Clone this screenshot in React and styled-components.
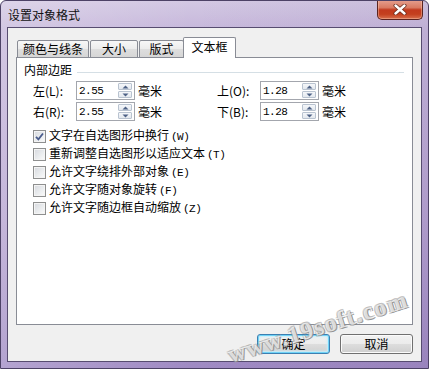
import React from 'react';
import styled, { createGlobalStyle } from 'styled-components';

const Global = createGlobalStyle`
  html, body { margin: 0; padding: 0; background: #ffffff; }
  body {
    font-family: "Noto Sans CJK SC", "Noto Sans", sans-serif;
    font-size: 12px;
    color: #000;
  }
  * { box-sizing: border-box; }
`;

const Window = styled.div`
  position: relative;
  width: 429px;
  height: 369px;
  display: flex;
  flex-direction: column;
  border: 1px solid #4d4266;
  border-radius: 6px 6px 0 0;
  background:
    linear-gradient(90deg, rgba(255,255,255,0.22) 0%, rgba(255,255,255,0) 45%, rgba(60,30,100,0.06) 100%),
    linear-gradient(180deg, #d3c8e3 0%, #c6b7db 8%, #b5a2d0 60%, #9f8ac3 100%);
  overflow: hidden;
`;

const TitleBar = styled.div`
  height: 26px;
  flex-shrink: 0;
  display: flex;
  align-items: flex-start;
  padding: 0 5px 0 7px;
`;

const Title = styled.div`
  margin-top: 6px;
  font-size: 12px;
  line-height: 16px;
  color: #111;
`;

const CloseButton = styled.div`
  margin-left: auto;
  margin-top: -1px;
  width: 46px;
  height: 20px;
  border: 1px solid #5b2420;
  border-top: none;
  border-radius: 0 0 5px 5px;
  background: linear-gradient(180deg, #e6a090 0%, #d97a62 40%, #c23a1e 52%, #c4401f 75%, #d8704e 100%);
  box-shadow: inset 0 0 0 1px rgba(255, 210, 190, 0.4);
  display: flex;
  align-items: center;
  justify-content: center;
`;

const Client = styled.div`
  flex: 1;
  margin: 0 6px 6px;
  border: 1px solid #574c70;
  background: #f0f0f0;
  padding: 9px 8px 7px 8px;
  display: flex;
  flex-direction: column;
`;

const TabRow = styled.div`
  height: 21px;
  margin-bottom: -1px;
  display: flex;
  align-items: flex-end;
  position: relative;
  z-index: 1;
`;

const Tab = styled.div`
  width: ${p => p.$w}px;
  margin-left: ${p => p.$ml}px;
  height: ${p => (p.$active ? 21 : 18)}px;
  border: 1px solid #898c95;
  border-bottom: ${p => (p.$active ? 'none' : '1px solid #898c95')};
  border-radius: 2px 2px 0 0;
  background: ${p =>
    p.$active
      ? '#ffffff'
      : 'linear-gradient(180deg, #f7f7f7 0%, #ececec 50%, #dedede 51%, #d6d6d6 100%)'};
  display: flex;
  align-items: center;
  justify-content: center;
  padding-bottom: ${p => (p.$active ? 2 : 0)}px;
  font-size: 12px;
  line-height: 14px;
  position: relative;
  z-index: ${p => (p.$active ? 2 : 1)};
`;

const Panel = styled.div`
  flex: 1;
  border: 1px solid #898c95;
  background: #ffffff;
  padding: 4px 8px 0 7px;
  display: flex;
  flex-direction: column;
`;

const GroupHeader = styled.div`
  height: 16px;
  display: flex;
  align-items: center;
  gap: 5px;
`;

const GroupTitle = styled.span`
  font-size: 12px;
  line-height: 16px;
`;

const GroupLine = styled.div`
  flex: 1;
  height: 1px;
  margin-top: 4px;
  background: #d5dfe5;
`;

const SpinGrid = styled.div`
  margin-top: 3px;
  padding-left: 9px;
  display: flex;
  flex-direction: column;
  gap: 2px;
`;

const SpinRow = styled.div`
  display: flex;
  height: 19px;
`;

const Field = styled.div`
  width: 184px;
  display: flex;
  align-items: center;
`;

const FieldLabel = styled.span`
  width: 43px;
  font-size: 12px;
  line-height: 14px;
  white-space: nowrap;
`;

const InputBox = styled.div`
  width: 59px;
  height: 19px;
  border: 1px solid #a3a6ad;
  background: #fff;
  display: flex;
  align-items: center;
  padding: 0 2px 0 2px;
`;

const Value = styled.span`
  flex: 1;
  font-family: "Liberation Mono", "DejaVu Sans Mono", monospace;
  font-size: 11px;
  letter-spacing: -0.5px;
  line-height: 14px;
`;

const Spinner = styled.div`
  width: 14px;
  height: 15px;
  display: flex;
  flex-direction: column;
  gap: 1px;
`;

const SpinHalf = styled.div`
  flex: 1;
  border: 1px solid #b9c3d0;
  border-radius: 1px;
  background: linear-gradient(180deg, #f5f7fa 0%, #e3e8ee 100%);
  display: flex;
  align-items: center;
  justify-content: center;
`;

const Unit = styled.span`
  margin-left: 3px;
  font-size: 12px;
  line-height: 14px;
`;

const CheckList = styled.div`
  margin-top: 6px;
  padding-left: 9px;
  display: flex;
  flex-direction: column;
`;

const CheckRow = styled.div`
  height: 18px;
  display: flex;
  align-items: center;
`;

const CheckBox = styled.div`
  width: 13px;
  height: 13px;
  border: 1px solid #8e8f8f;
  background: linear-gradient(135deg, #d6d9de 0%, #eceef0 60%, #fbfbfb 100%);
  box-shadow: inset 0 0 0 1px #f4f4f4;
  display: flex;
  align-items: center;
  justify-content: center;
  margin-right: 3px;
  flex-shrink: 0;
`;

const CheckText = styled.span`
  font-size: 12px;
  line-height: 14px;
  white-space: nowrap;
`;

const Key = styled.span`
  margin-left: 2px;
  font-family: "Liberation Mono", "DejaVu Sans Mono", monospace;
  font-size: 11px;
  letter-spacing: -0.5px;
`;

const ButtonRow = styled.div`
  margin-top: 9px;
  height: 20px;
  display: flex;
  justify-content: flex-end;
  gap: 10px;
`;

const Button = styled.div`
  width: 73px;
  height: 20px;
  border: 1px solid ${p => (p.$default ? '#3c7fb1' : '#707070')};
  border-radius: 3px;
  background: linear-gradient(180deg, #f2f2f2 0%, #ebebeb 50%, #dddddd 51%, #cfcfcf 100%);
  box-shadow: ${p =>
    p.$default ? 'inset 0 0 0 1px #6fd3f7, inset 0 0 2px 2px #c8eefb' : 'inset 0 0 0 1px #fbfbfb'};
  display: flex;
  align-items: center;
  justify-content: center;
  font-size: 12px;
  line-height: 14px;
`;

const Watermark = styled.div`
  position: absolute;
  left: 317px;
  top: 326px;
  transform: translate(-50%, -50%) rotate(-17.5deg);
  font-family: "Liberation Serif", serif;
  font-weight: bold;
  font-size: 24px;
  line-height: 24px;
  letter-spacing: 1.5px;
  white-space: nowrap;
  color: rgba(255, 255, 255, 0.7);
  text-shadow:
    1px 1px 0 rgba(130, 130, 130, 0.75),
    -1px -1px 0 rgba(175, 175, 175, 0.6),
    1px -1px 0 rgba(160, 160, 160, 0.6),
    -1px 1px 0 rgba(160, 160, 160, 0.6);
  pointer-events: none;
  z-index: 5;
`;

const Arrow = ({ up }) => (
  <svg width="7" height="4" viewBox="0 0 7 4">
    <path d={up ? 'M0.5 3.5 L3.5 0.5 L6.5 3.5 Z' : 'M0.5 0.5 L3.5 3.5 L6.5 0.5 Z'} fill="#4d6185" />
  </svg>
);

const SpinField = ({ label, value }) => (
  <Field>
    <FieldLabel>{label}</FieldLabel>
    <InputBox>
      <Value>{value}</Value>
      <Spinner>
        <SpinHalf><Arrow up /></SpinHalf>
        <SpinHalf><Arrow /></SpinHalf>
      </Spinner>
    </InputBox>
    <Unit>毫米</Unit>
  </Field>
);

const checks = [
  { text: '文字在自选图形中换行', key: '(W)', checked: true },
  { text: '重新调整自选图形以适应文本', key: '(T)' },
  { text: '允许文字绕排外部对象', key: '(E)' },
  { text: '允许文字随对象旋转', key: '(F)' },
  { text: '允许文字随边框自动缩放', key: '(Z)' },
];

export default function App() {
  return (
    <>
      <Global />
      <Window>
        <TitleBar>
          <Title>设置对象格式</Title>
          <CloseButton>
            <svg width="14" height="11" viewBox="0 0 14 11">
              <path d="M2.5 1.5 L11.5 9.5 M11.5 1.5 L2.5 9.5" stroke="#6a2a1c" strokeWidth="4" strokeLinecap="round" />
              <path d="M2.5 1.5 L11.5 9.5 M11.5 1.5 L2.5 9.5" stroke="#ffffff" strokeWidth="2.4" strokeLinecap="round" />
            </svg>
          </CloseButton>
        </TitleBar>
        <Client>
          <TabRow>
            <Tab $w={72} $ml={1}>颜色与线条</Tab>
            <Tab $w={48} $ml={1}>大小</Tab>
            <Tab $w={45} $ml={1}>版式</Tab>
            <Tab $w={53} $ml={-1} $active>文本框</Tab>
          </TabRow>
          <Panel>
            <GroupHeader>
              <GroupTitle>内部边距</GroupTitle>
              <GroupLine />
            </GroupHeader>
            <SpinGrid>
              <SpinRow>
                <SpinField label="左(L):" value="2.55" />
                <SpinField label="上(O):" value="1.28" />
              </SpinRow>
              <SpinRow>
                <SpinField label="右(R):" value="2.55" />
                <SpinField label="下(B):" value="1.28" />
              </SpinRow>
            </SpinGrid>
            <CheckList>
              {checks.map(c => (
                <CheckRow key={c.key}>
                  <CheckBox>
                    {c.checked && (
                      <svg width="9" height="9" viewBox="0 0 9 9">
                        <path d="M1 4.8 L3.4 7.3 L8 1.5" stroke="#4a5c8c" strokeWidth="1.8" fill="none" />
                      </svg>
                    )}
                  </CheckBox>
                  <CheckText>
                    {c.text}
                    <Key>{c.key}</Key>
                  </CheckText>
                </CheckRow>
              ))}
            </CheckList>
          </Panel>
          <ButtonRow>
            <Button $default>确定</Button>
            <Button>取消</Button>
          </ButtonRow>
        </Client>
        <Watermark>www.19soft.com</Watermark>
      </Window>
    </>
  );
}
